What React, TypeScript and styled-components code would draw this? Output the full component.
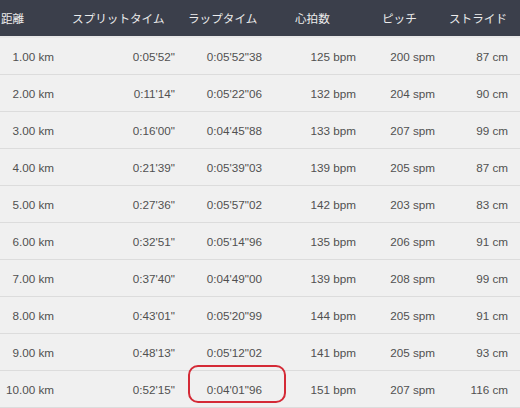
import React from "react";
import styled, { createGlobalStyle } from "styled-components";

const Global = createGlobalStyle`
  html, body { margin: 0; padding: 0; background: #f0f0f0; overflow: hidden; }
  body { width: 520px; height: 408px; }
`;

type Col = { w: number; hPad: number; dPad: number };
const cols: Col[] = [
  { w: 62, hPad: 1, dPad: 8 },
  { w: 118, hPad: 10, dPad: 5 },
  { w: 95, hPad: 8, dPad: 13 },
  { w: 90, hPad: 20, dPad: 9 },
  { w: 75, hPad: 17, dPad: 5 },
  { w: 80, hPad: 9, dPad: 12 },
];
const template = cols.map((c) => `${c.w}px`).join(" ");

const Table = styled.div`
  width: 520px;
  font-family: "Liberation Sans", Arial, "Noto Sans CJK JP", sans-serif;
`;

const HeaderRow = styled.div`
  display: grid;
  grid-template-columns: ${template};
  height: 36px;
  background: #3b3f4b;
  border-bottom: 2px solid #e8e8e8;
`;

const HeaderCell = styled.div<{ $pad: number }>`
  display: flex;
  align-items: center;
  padding-left: ${(p) => p.$pad}px;
  color: #ececec;
  font-family: "Noto Sans CJK JP", sans-serif;
  font-size: 11.6px;
  white-space: nowrap;
`;

const Row = styled.div`
  display: grid;
  grid-template-columns: ${template};
  height: 36px;
  background: #f0f0f0;
  border-bottom: 1px solid #dcdcdc;
`;

const Cell = styled.div<{ $pad: number }>`
  position: relative;
  display: flex;
  align-items: center;
  justify-content: flex-end;
  padding-right: ${(p) => p.$pad}px;
  color: #505050;
  font-size: 11.7px;
  white-space: nowrap;
`;

const Highlight = styled.div`
  position: absolute;
  left: 8px;
  top: -6px;
  width: 94px;
  height: 34px;
  border: 2px solid #d42a36;
  border-radius: 10px;
  pointer-events: none;
`;

const headers = ["距離", "スプリットタイム", "ラップタイム", "心拍数", "ピッチ", "ストライド"];

const data: string[][] = [
  ["1.00 km", "0:05'52\"", "0:05'52\"38", "125 bpm", "200 spm", "87 cm"],
  ["2.00 km", "0:11'14\"", "0:05'22\"06", "132 bpm", "204 spm", "90 cm"],
  ["3.00 km", "0:16'00\"", "0:04'45\"88", "133 bpm", "207 spm", "99 cm"],
  ["4.00 km", "0:21'39\"", "0:05'39\"03", "139 bpm", "205 spm", "87 cm"],
  ["5.00 km", "0:27'36\"", "0:05'57\"02", "142 bpm", "203 spm", "83 cm"],
  ["6.00 km", "0:32'51\"", "0:05'14\"96", "135 bpm", "206 spm", "91 cm"],
  ["7.00 km", "0:37'40\"", "0:04'49\"00", "139 bpm", "208 spm", "99 cm"],
  ["8.00 km", "0:43'01\"", "0:05'20\"99", "144 bpm", "205 spm", "91 cm"],
  ["9.00 km", "0:48'13\"", "0:05'12\"02", "141 bpm", "205 spm", "93 cm"],
  ["10.00 km", "0:52'15\"", "0:04'01\"96", "151 bpm", "207 spm", "116 cm"],
];

export default function App() {
  return (
    <>
      <Global />
      <Table>
        <HeaderRow>
          {headers.map((h, i) => (
            <HeaderCell key={h} $pad={cols[i].hPad}>
              {h}
            </HeaderCell>
          ))}
        </HeaderRow>
        {data.map((row, r) => (
          <Row key={r}>
            {row.map((v, i) => (
              <Cell key={i} $pad={cols[i].dPad}>
                {r === data.length - 1 && i === 2 && <Highlight />}
                {v}
              </Cell>
            ))}
          </Row>
        ))}
      </Table>
    </>
  );
}
